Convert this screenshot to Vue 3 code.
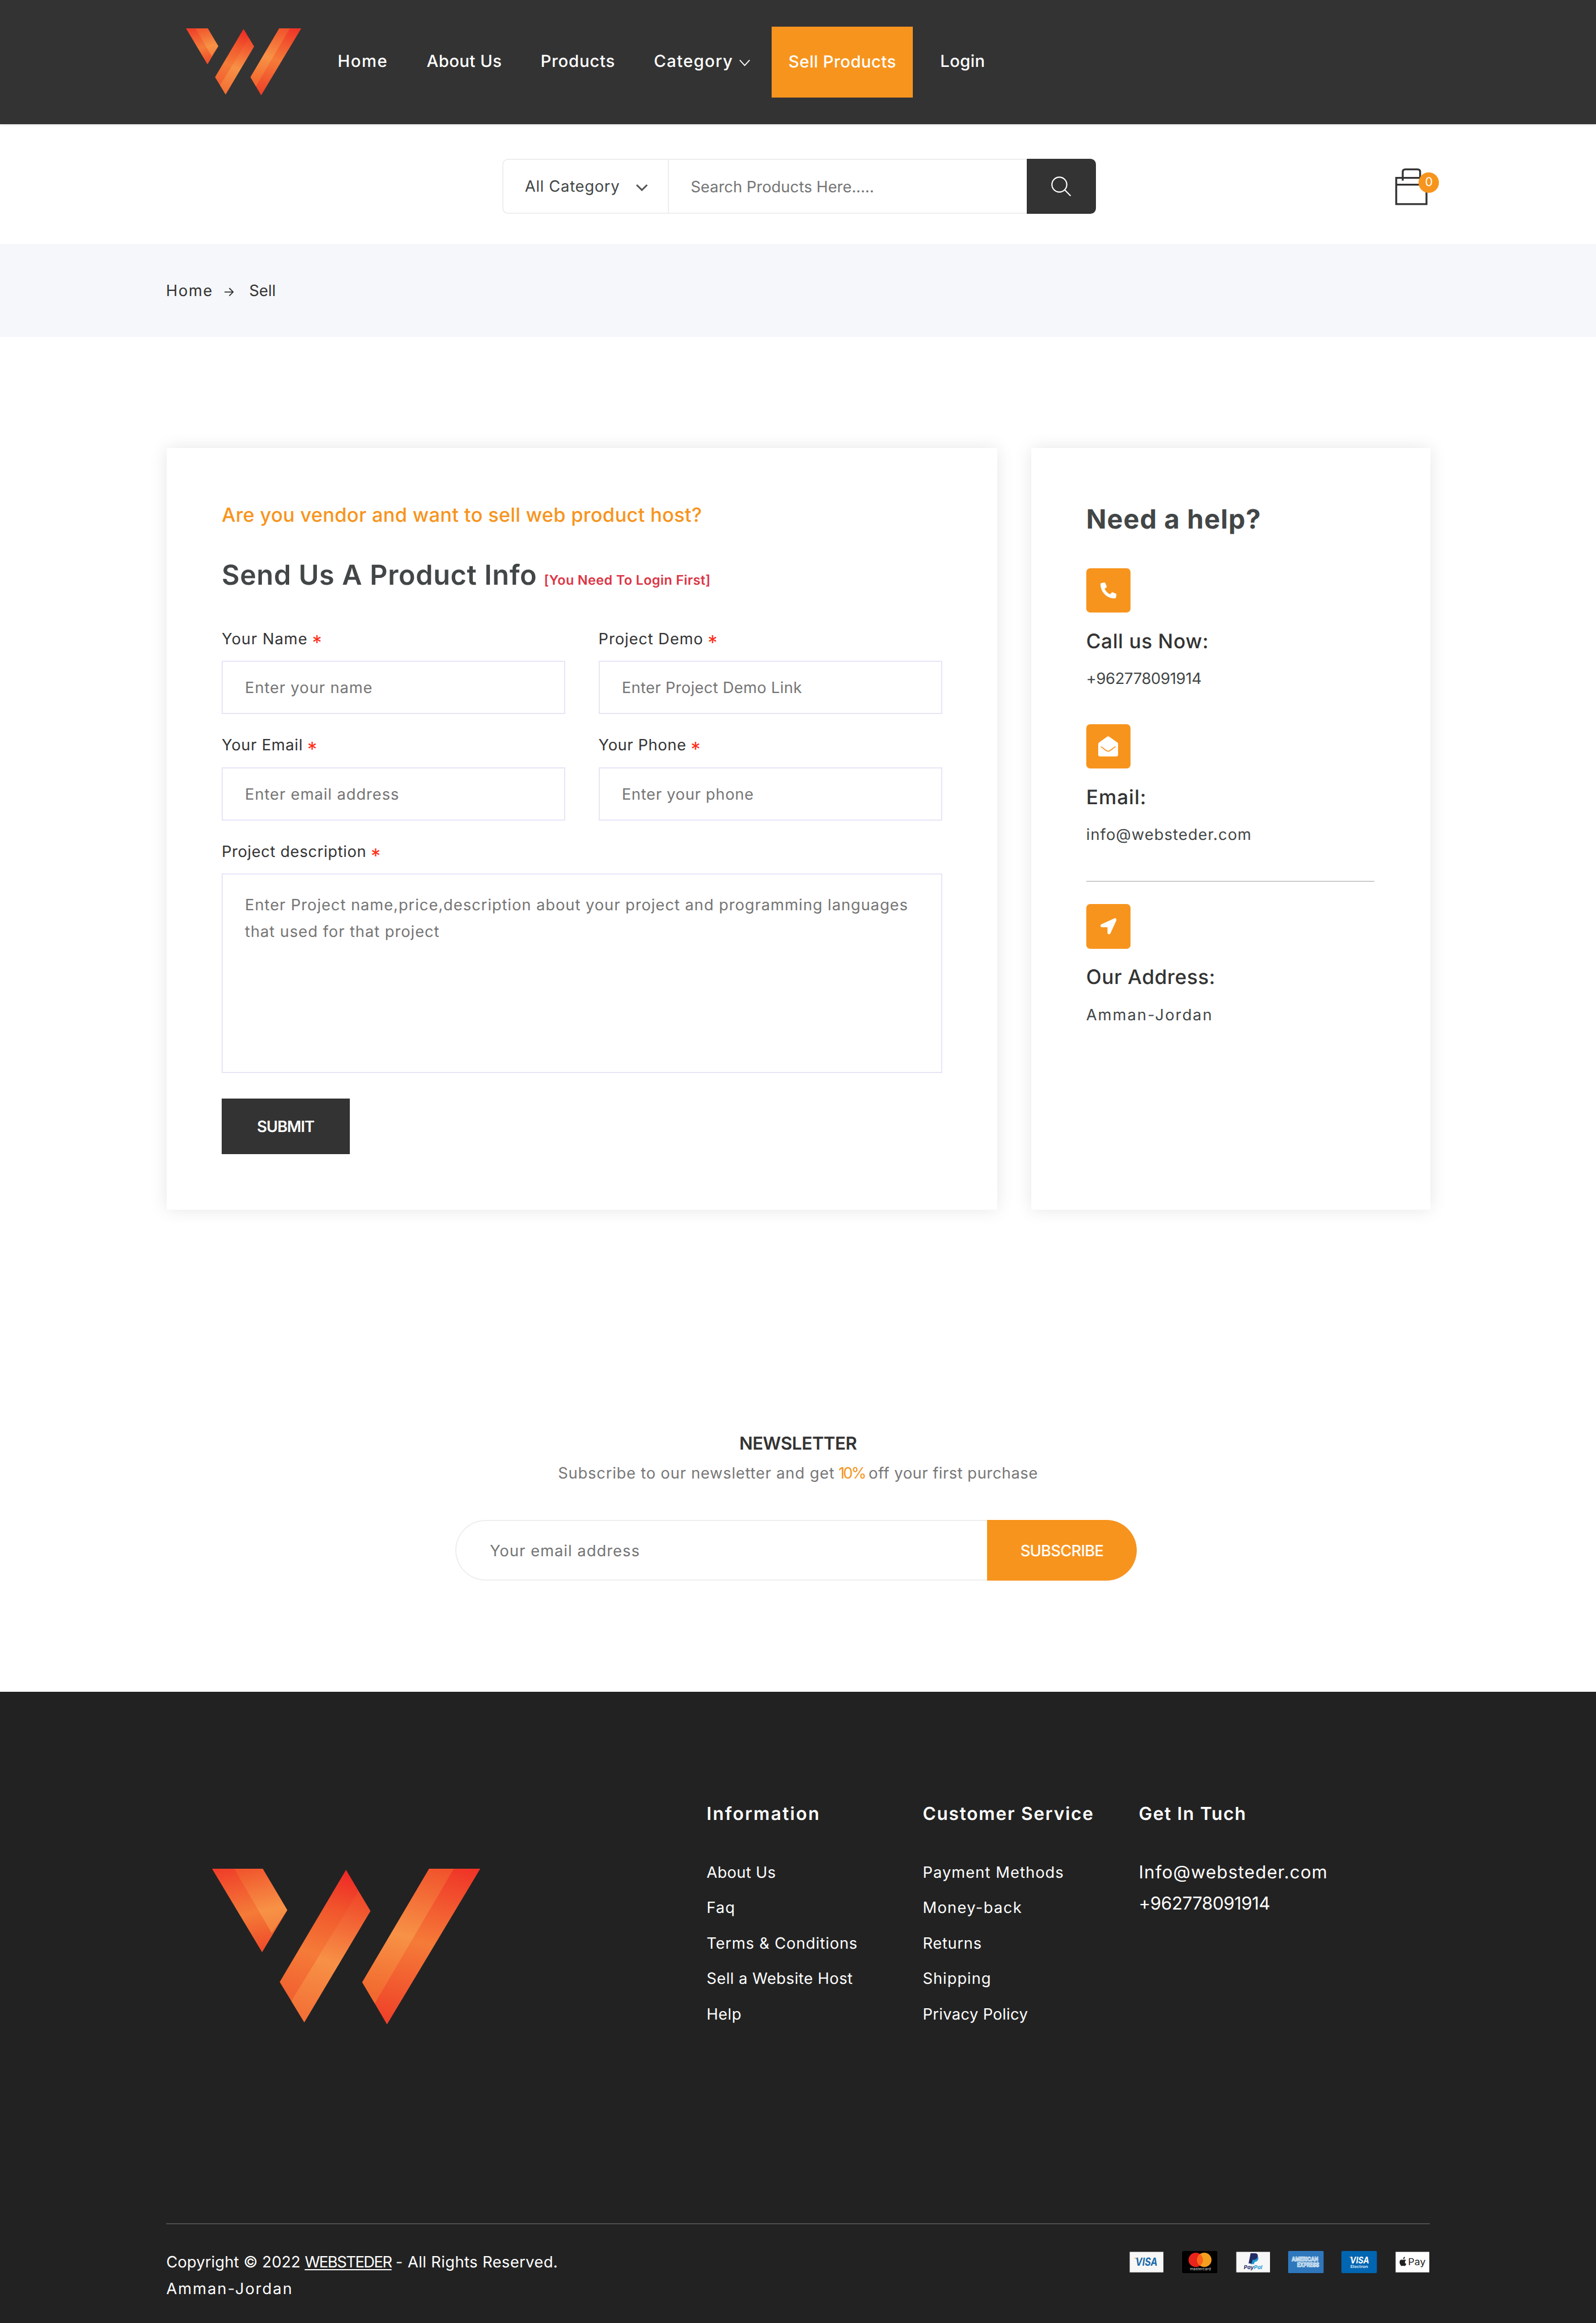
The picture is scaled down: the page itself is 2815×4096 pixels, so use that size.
<script setup>
// Spreads a label's letters so that it takes up its designed width (in tenths of a rem).
const ctx = document.createElement('canvas').getContext('2d')
const vFit = {
  mounted(el, { value }) {
    const { width, text } = typeof value === 'object' ? value : { width: value }
    const unit = parseFloat(getComputedStyle(document.documentElement).fontSize) / 10
    const label = (text || el.placeholder || el.textContent).trim()
    ctx.font = getComputedStyle(el).font
    const spacing = (width * unit - ctx.measureText(label).width) / label.length
    el.style.letterSpacing = `${spacing.toFixed(3)}px`
  },
}

const fields = [
  { label: 'Your Name', lw: 77.6, hint: 'Enter your name', hw: 115.3 },
  { label: 'Project Demo', lw: 94.6, hint: 'Enter Project Demo Link', hw: 162.6 },
  { label: 'Your Email', lw: 73.3, hint: 'Enter email address', hw: 139.3 },
  { label: 'Your Phone', lw: 79.2, hint: 'Enter your phone', hw: 119.2 },
]
const areaHint =
  'Enter Project name,price,description about your project and programming languages that used for that project'
const areaLine = 'Enter Project name,price,description about your project and programming languages'

const columns = [
  {
    title: 'Information', tw: 102.8,
    links: [['About Us', 62.6], ['Faq', 26], ['Terms & Conditions', 136.4], ['Sell a Website Host', 132], ['Help', 31.6]],
  },
  {
    title: 'Customer Service', tw: 154.6,
    links: [['Payment Methods', 127.6], ['Money-back', 89.8], ['Returns', 53.4], ['Shipping', 62], ['Privacy Policy', 95]],
  },
]
</script>

<template>
  <div class="page">
    <svg class="defs" width="0" height="0" aria-hidden="true">
      <defs>
        <linearGradient id="g1" gradientUnits="userSpaceOnUse" x1="70" y1="40" x2="110" y2="205">
          <stop offset="0" stop-color="#ef3828" /><stop offset=".58" stop-color="#f47b38" /><stop offset="1" stop-color="#ef4a29" />
        </linearGradient>
        <linearGradient id="g2" gradientUnits="userSpaceOnUse" x1="110" y1="45" x2="140" y2="180">
          <stop offset="0" stop-color="#f0522b" /><stop offset=".62" stop-color="#f79246" /><stop offset="1" stop-color="#f47b3c" />
        </linearGradient>
        <linearGradient id="g3" gradientUnits="userSpaceOnUse" x1="290" y1="60" x2="225" y2="300">
          <stop offset="0" stop-color="#ee2a26" /><stop offset=".28" stop-color="#f1562c" /><stop offset=".62" stop-color="#f57b38" /><stop offset="1" stop-color="#f15f30" />
        </linearGradient>
        <linearGradient id="g4" gradientUnits="userSpaceOnUse" x1="310" y1="100" x2="240" y2="340">
          <stop offset="0" stop-color="#f0482a" /><stop offset=".52" stop-color="#f79146" /><stop offset="1" stop-color="#f36c34" />
        </linearGradient>
        <linearGradient id="g5" gradientUnits="userSpaceOnUse" x1="450" y1="40" x2="390" y2="290">
          <stop offset="0" stop-color="#f04e2a" /><stop offset=".55" stop-color="#f79246" /><stop offset="1" stop-color="#f2692f" />
        </linearGradient>
        <linearGradient id="g6" gradientUnits="userSpaceOnUse" x1="500" y1="50" x2="430" y2="340">
          <stop offset="0" stop-color="#ef3427" /><stop offset=".5" stop-color="#f57b38" /><stop offset="1" stop-color="#ef4229" />
        </linearGradient>
        <g id="mark">
          <path fill="url(#g1)" d="M42.9 51H134.3L178.6 125.7 133.2 201.7z" />
          <path fill="url(#g2)" d="M83 51H134.3L178.6 125.7 150.5 167z" />
          <path fill="url(#g3)" d="M284.6 53L328.6 127.3 209.3 328 165 255.3z" />
          <path fill="url(#g4)" d="M307 92L328.6 127.3 209.3 328 186 289.5z" />
          <path fill="url(#g6)" d="M434.6 51H526.8L358.6 331.7 313.9 255.7z" />
          <path fill="url(#g5)" d="M434.6 51H479L336.5 294 313.9 255.7z" />
        </g>
      </defs>
    </svg>

    <header class="header">
      <svg class="logo" viewBox="42.9 51 483.9 280.7"><use href="#mark" /></svg>
      <nav class="nav">
        <a><span v-fit="45.4">Home</span></a>
        <a><span v-fit="67.8">About Us</span></a>
        <a><span v-fit="67.2">Products</span></a>
        <a class="drop">
          <span v-fit="71.6">Category</span>
          <svg viewBox="0 0 9.7 6"><path d="M.4.4L4.85 5.3 9.3.4" fill="none" stroke="#fff" stroke-width=".95" /></svg>
        </a>
        <a class="sell"><span v-fit="97.2">Sell Products</span></a>
        <a><span v-fit="40.6">Login</span></a>
      </nav>
    </header>

    <div class="tools">
      <div class="search">
        <div class="category">
          <span v-fit="85.8">All Category</span>
          <svg viewBox="0 0 11.4 7"><path d="M1 1L5.7 5.7 10.4 1" fill="none" stroke="#555" stroke-width="1.5" /></svg>
        </div>
        <input v-fit="165.4" type="text" placeholder="Search Products Here....." />
        <button aria-label="Search">
          <svg viewBox="0 0 18.2 18.2" fill="none" stroke="#fff" stroke-width="1.1">
            <circle cx="7.4" cy="7.4" r="6.7" /><path d="M12.2 12.2l5.4 5.4" />
          </svg>
        </button>
      </div>
      <div class="cart">
        <svg viewBox="0 0 29 33" fill="none" stroke="#333" stroke-width="1.7">
          <path d="M.85 8.55H28.15V32.15H.85zM.85 14.6H28.15M6.7 11V3.3Q6.7.85 9.1.85H20Q22.4.85 22.4 3.3V11" />
        </svg>
        <span class="badge">0</span>
      </div>
    </div>

    <div class="crumbs">
      <span v-fit="42.4">Home</span>
      <svg viewBox="0 0 8.4 8" fill="none" stroke="#333" stroke-width=".95"><path d="M0 4H7.6M4.3.5L7.8 4 4.3 7.5" /></svg>
      <span v-fit="24">Sell</span>
    </div>

    <main class="cards">
      <form class="card form">
        <p class="eyebrow"><span v-fit="433.4">Are you vendor and want to sell web product host?</span></p>
        <h2>
          <span v-fit="284.6">Send Us A Product Info</span>
          <small v-fit="150.4">[You Need To Login First]</small>
        </h2>
        <div class="grid">
          <div v-for="f in fields" :key="f.label" class="field">
            <label><span v-fit="f.lw">{{ f.label }}</span><i>*</i></label>
            <input v-fit="f.hw" type="text" :placeholder="f.hint" />
          </div>
        </div>
        <div class="field">
          <label><span v-fit="130.6">Project description</span><i>*</i></label>
          <textarea v-fit="{ width: 598.4, text: areaLine }" :placeholder="areaHint"></textarea>
        </div>
        <button class="submit" type="button"><span v-fit="51.6">SUBMIT</span></button>
      </form>

      <aside class="card help">
        <h3><span v-fit="158">Need a help?</span></h3>
        <div class="info">
          <div class="tile">
            <svg class="sm" viewBox="0 0 512 512"><path fill="#fff" d="M493.4 24.6l-104-24c-11.3-2.6-22.9 3.3-27.5 13.9l-48 112c-4.2 9.8-1.4 21.3 6.9 28l60.6 49.6c-36 76.7-98.9 140.5-177.2 177.2l-49.6-60.6c-6.8-8.3-18.2-11.1-28-6.9l-112 48C3.9 366.5-2 378.1.6 389.4l24 104C27.1 504.2 36.7 512 48 512c256.1 0 464-207.5 464-464 0-11.2-7.7-20.9-18.6-23.4z" transform="matrix(-1 0 0 1 512 0)" /></svg>
          </div>
          <h4><span v-fit="110.6">Call us Now:</span></h4>
          <p><span v-fit="104">+962778091914</span></p>
        </div>
        <div class="info">
          <div class="tile">
            <svg class="lg" viewBox="0 0 18 18.3">
              <path fill="#fff" d="M0 7.2Q0 6.3.7 5.8L7.3 1Q9-.4 10.7 1L17.3 5.8Q18 6.3 18 7.2V16.6Q18 18.3 16.3 18.3H1.7Q0 18.3 0 16.6z" />
              <path d="M2.4 9.4L7 12.8Q9 14.4 11 12.8L15.6 9.4" fill="none" stroke="#f7941d" stroke-width=".9" />
            </svg>
          </div>
          <h4><span v-fit="54.6">Email:</span></h4>
          <p><span v-fit="149.4">info@websteder.com</span></p>
        </div>
        <hr />
        <div class="info last">
          <div class="tile">
            <svg class="sm" viewBox="0 0 512 512"><path fill="#fff" d="M444.52 3.52L28.74 195.42c-47.97 22.39-31.98 92.75 19.19 92.75h175.91v175.91c0 51.17 70.36 67.17 92.75 19.19l191.9-415.78c15.99-38.39-25.59-79.97-63.97-63.97z" /></svg>
          </div>
          <h4><span v-fit="116.6">Our Address:</span></h4>
          <p><span v-fit="114.4">Amman-Jordan</span></p>
        </div>
      </aside>
    </main>

    <section class="newsletter">
      <h4><span v-fit="106">NEWSLETTER</span></h4>
      <p>
        <span v-fit="249.6">Subscribe to our newsletter and get</span>
        <b v-fit="24">10%</b>
        <span v-fit="152.8">off your first purchase</span>
      </p>
      <div class="subscribe">
        <input v-fit="135.6" type="text" placeholder="Your email address" />
        <button><span v-fit="75">SUBSCRIBE</span></button>
      </div>
    </section>

    <footer class="footer">
      <div class="top">
        <div class="brand"><svg viewBox="42.9 51 483.9 280.7"><use href="#mark" /></svg></div>
        <div v-for="c in columns" :key="c.title" class="col">
          <h5><span v-fit="c.tw">{{ c.title }}</span></h5>
          <ul>
            <li v-for="[text, w] in c.links" :key="text"><span v-fit="w">{{ text }}</span></li>
          </ul>
        </div>
        <div class="col contact">
          <h5><span v-fit="97.2">Get In Tuch</span></h5>
          <p><span v-fit="170.6">Info@websteder.com</span></p>
          <p><span v-fit="118.4">+962778091914</span></p>
        </div>
      </div>
      <div class="bottom">
        <div class="copy">
          <p class="line">
            <span v-fit="121.2">Copyright © 2022</span>
            <u v-fit="78.4">WEBSTEDER</u>
            <span v-fit="146.4">- All Rights Reserved.</span>
          </p>
          <p><span v-fit="114.4">Amman-Jordan</span></p>
        </div>
        <div class="pay">
          <svg viewBox="0 0 32 20">
            <rect x=".8" y=".8" width="30.4" height="18.5" fill="#f7f7f7" />
            <path d="M4.6 6.2H7.6L8.6 9.6Q7 7.2 4.6 6.2z" fill="#e8a33d" />
            <text x="6" y="13.5" font-size="10" font-weight="700" font-style="italic" textLength="19.8" lengthAdjust="spacingAndGlyphs" fill="#1769aa">VISA</text>
          </svg>
          <svg viewBox="0 0 32 20">
            <rect width="32" height="20" rx="1.5" fill="#000" />
            <circle cx="12.3" cy="8" r="6.5" fill="#e9241b" /><circle cx="20" cy="8" r="6.5" fill="#f59f1e" />
            <path d="M16.15 2.76A6.5 6.5 0 0 1 16.15 13.24A6.5 6.5 0 0 1 16.15 2.76z" fill="#f9631b" />
            <text x="7" y="17.6" font-size="3.6" textLength="19" lengthAdjust="spacingAndGlyphs" fill="#ccc">mastercard</text>
          </svg>
          <svg viewBox="0 0 32 20">
            <rect x=".8" y=".8" width="30.4" height="18.5" fill="#f7f7f7" />
            <path d="M14.6 4.2H19.5Q21.2 5.5 20.5 7.8 19.8 9.6 17.6 9.7L16.6 11.9H13.6z" fill="#1f9ad6" />
            <path d="M13.7 2.1H18Q20.6 2.4 20.2 5.1 19.6 7.9 16.3 7.9H15.5L14.7 11.2H11.9z" fill="#232c65" />
            <text x="7.6" y="16.6" font-size="5" font-weight="700" font-style="italic" textLength="16.6" lengthAdjust="spacingAndGlyphs" fill="#26306b">Pay<tspan fill="#2a9bd4">Pal</tspan></text>
          </svg>
          <svg viewBox="0 0 32 20">
            <rect width="32" height="20" rx=".8" fill="#2e77bc" />
            <g font-weight="700" fill="#2e77bc" stroke="#dbe9f6" stroke-width=".55">
              <text x="3.2" y="9.4" font-size="5.4" textLength="24" lengthAdjust="spacingAndGlyphs">AMERICAN</text>
              <text x="8" y="14.5" font-size="5.4" textLength="20" lengthAdjust="spacingAndGlyphs">EXPRESS</text>
            </g>
          </svg>
          <svg viewBox="0 0 32 20">
            <rect width="32" height="20" rx="1.2" fill="#0066b2" />
            <path d="M6.8 5.2H9L9.8 8Q8.5 6 6.8 5.2z" fill="#e8a33d" />
            <text x="7.8" y="11.2" font-size="8.4" font-weight="700" font-style="italic" textLength="17.2" lengthAdjust="spacingAndGlyphs" fill="#fff">VISA</text>
            <text x="8" y="15.6" font-size="3.7" font-weight="700" textLength="16" lengthAdjust="spacingAndGlyphs" fill="#cfe1f1">Electron</text>
          </svg>
          <svg viewBox="0 0 32 20">
            <rect x=".8" y=".8" width="30.4" height="18.5" fill="#fff" />
            <path d="M7.6 7.5C7.5 6.3 8.2 5.5 9.2 5.3 9.3 6.5 8.6 7.3 7.6 7.5zM10.2 8.3Q9 9 9.2 10.3 9.4 11.4 10.5 11.8 9.6 13.7 8.7 13.5 7.6 13 6.6 13.5 5.6 13.8 4.7 11.8 3.9 9.4 5 8.3 6 7.5 7.5 8.1 9.2 7.4 10.2 8.3z" fill="#222" />
            <text x="12" y="13" font-size="8.7" textLength="15.8" lengthAdjust="spacingAndGlyphs" fill="#222">Pay</text>
          </svg>
        </div>
      </div>
    </footer>
  </div>
</template>

<style>
html { font-size: 19.54861px; }
body { margin: 0; background: #fff; }
</style>

<style scoped>
.page {
  width: 2815px; height: 4096px; overflow: hidden;
  display: flex; flex-direction: column;
  font: 400 1.4rem/2.4rem Inter, "Open Sans", sans-serif;
  color: #424646; background: #fff; text-rendering: geometricPrecision;
}
.page * { box-sizing: border-box; }
h2, h3, h4, h5, p, ul, hr { margin: 0; padding: 0; }
ul { list-style: none; }
span, small, b, u { white-space: nowrap; }
svg { display: block; flex: none; }
input, textarea, button { font: inherit; margin: 0; outline: 0; color: inherit; border-radius: 0; text-rendering: inherit; }
input::placeholder, textarea::placeholder { color: #757575; opacity: 1; }
.defs { position: absolute; }

.header {
  height: 11.2rem; flex: none; padding-left: 16.8rem;
  display: flex; align-items: center;
  background: #333; box-shadow: 0 1px 4px rgba(0, 0, 0, .15);
}
.logo { width: 10.4rem; height: 6.04rem; }
.nav { display: flex; align-items: center; margin-left: 3.26rem; font-size: 1.5rem; font-weight: 500; color: #fff; }
.nav a { margin-right: 3.5rem; }
.nav .drop { display: flex; align-items: center; margin-right: 1.95rem; }
.drop svg { width: .97rem; height: .6rem; margin: .15rem 0 0 .55rem; }
.nav .sell { height: 6.4rem; width: 12.74rem; line-height: 6.4rem; text-align: center; background: #f7941d; margin-right: 2.46rem; }

.tools { height: 10.8rem; flex: none; padding: 3.1rem 0 0 45.3rem; display: flex; }
.search { display: flex; width: 53.6rem; height: 5rem; }
.category {
  width: 14.95rem; padding-left: 1.95rem; display: flex; align-items: center;
  border: 2px solid #eee; border-right: 0; border-radius: .5rem 0 0 .5rem;
}
.category svg { width: 1.14rem; height: .7rem; margin: .2rem 0 0 1.43rem; }
.search input { flex: 1; width: 0; padding: .06rem 0 0 1.97rem; border: 2px solid #eee; border-right: 0; background: #fff; }
.search button {
  width: 6.26rem; border: 0; border-radius: 0 .5rem .5rem 0; background: #333; padding: 0;
  display: flex; align-items: center; justify-content: center;
}
.search button svg { width: 1.82rem; height: 1.82rem; }
.cart { position: relative; margin: .9rem 0 0 27rem; width: 2.9rem; height: 3.3rem; }
.cart svg { width: 2.9rem; height: 3.3rem; }
.badge {
  position: absolute; left: 2.1rem; top: .35rem; width: 1.85rem; height: 1.85rem; border-radius: 50%;
  background: #f7941d; color: #fff; font-size: 1.1rem; line-height: 1.8rem; text-align: center;
}

.crumbs { height: 8.4rem; flex: none; padding: .06rem 0 0 14.98rem; display: flex; align-items: center; background: #f6f7fb; color: #333; }
.crumbs svg { width: .84rem; height: .8rem; margin: .2rem 1.4rem 0 1.02rem; }

.cards { display: flex; gap: 3.04rem; padding: 10rem 14.95rem 0 15.05rem; height: 78.7rem; flex: none; }
.card { background: #fff; box-shadow: 0 0 1.5rem rgba(0, 0, 0, .1); }
.form { width: 74.95rem; padding: 4.91rem 5rem 0 4.95rem; }
.eyebrow { font-size: 1.76rem; font-weight: 500; color: #f7941d; }
.form h2 { margin-top: 2.67rem; height: 3rem; font-size: 2.48rem; line-height: 3rem; font-weight: 600; display: flex; align-items: baseline; gap: .62rem; }
.form small { font-size: 1.2rem; color: #dc3545; }
.grid { margin-top: 3.03rem; display: grid; grid-template-columns: 31rem 31rem; column-gap: 3rem; }
.field label { display: block; height: 2.4rem; color: #333; }
.field i { font-style: normal; font-size: 1.75rem; line-height: 0; color: #ff2c18; position: relative; top: .5rem; margin-left: .4rem; }
.field input {
  display: block; width: 31rem; height: 4.8rem; margin: .79rem 0 1.61rem; padding: 0 2rem;
  border: 2px solid #e8e5f7; background: #fff;
}
.field textarea {
  display: block; width: 65rem; height: 18rem; margin-top: .79rem; padding: 1.5rem 1.5rem 0 2rem;
  border: 2px solid #e8e5f7; resize: none; overflow: hidden; background: #fff;
}
.submit { display: block; margin-top: 2.3rem; width: 11.54rem; height: 5rem; padding: 0; border: 0; background: #333; color: #fff; font-weight: 600; }

.help { width: 36.02rem; padding: 4.96rem 4.9rem 0 4.96rem; }
.help h3 { font-size: 2.4rem; line-height: 3rem; font-weight: 700; }
.info { margin-top: 2.91rem; }
.tile { width: 4rem; height: 4rem; border-radius: .35rem; background: #f7941d; display: flex; align-items: center; justify-content: center; }
.tile .sm { width: 1.45rem; height: 1.45rem; }
.tile .lg { width: 1.8rem; height: 1.83rem; }
.help h4 { margin-top: 1.43rem; font-size: 1.8rem; font-weight: 500; color: #333; }
.help p { margin-top: .93rem; }
.help hr { margin-top: 2.93rem; width: 26rem; height: 2px; border: 0; background: #ccc; }
.info.last { margin-top: 2.03rem; }

.newsletter { height: 43.5rem; flex: none; padding-top: 19.9rem; text-align: center; }
.newsletter h4 { font-size: 1.6rem; font-weight: 600; color: #333; }
.newsletter p { margin-top: .27rem; color: #777; display: flex; justify-content: center; gap: .33rem; }
.newsletter b { font-weight: 400; color: #f7941d; }
.subscribe { display: flex; width: 61.5rem; height: 5.5rem; margin: 3.02rem 0 0 41.06rem; }
.subscribe input { flex: 1; width: 0; padding: .04rem 0 0 3.03rem; border: 2px solid #eee; border-right: 0; border-radius: 3rem 0 0 3rem; background: #fff; }
.subscribe button { width: 13.5rem; border: 0; padding: .04rem 0 0; border-radius: 0 3rem 3rem 0; background: #f7941d; color: #fff; font-weight: 500; }

.footer { flex: 1; padding: 9.83rem 15rem 0; background: #222; color: #fff; }
.top { display: flex; height: 38.22rem; border-bottom: 2px solid #4d4d4d; }
.brand { width: 48.75rem; padding: 6.13rem 0 0 4.14rem; }
.brand svg { width: 24.2rem; height: 14.04rem; }
.col { width: 19.5rem; }
.col h5 { font-size: 1.62rem; line-height: 2.4rem; font-weight: 600; margin-bottom: 2.84rem; }
.col li { margin-bottom: .8rem; }
.contact h5 { margin-bottom: 2.64rem; }
.contact p { font-size: 1.6rem; line-height: 2.8rem; }
.bottom { display: flex; justify-content: space-between; padding-top: 2.1rem; }
.copy { padding-top: .06rem; }
.line { display: flex; gap: .37rem; }
.copy u { text-underline-offset: .15rem; text-decoration-thickness: 2px; }
.pay { display: flex; gap: 1.6rem; padding-top: .3rem; margin-right: -.04rem; }
.pay svg { width: 3.2rem; height: 2rem; }
</style>
